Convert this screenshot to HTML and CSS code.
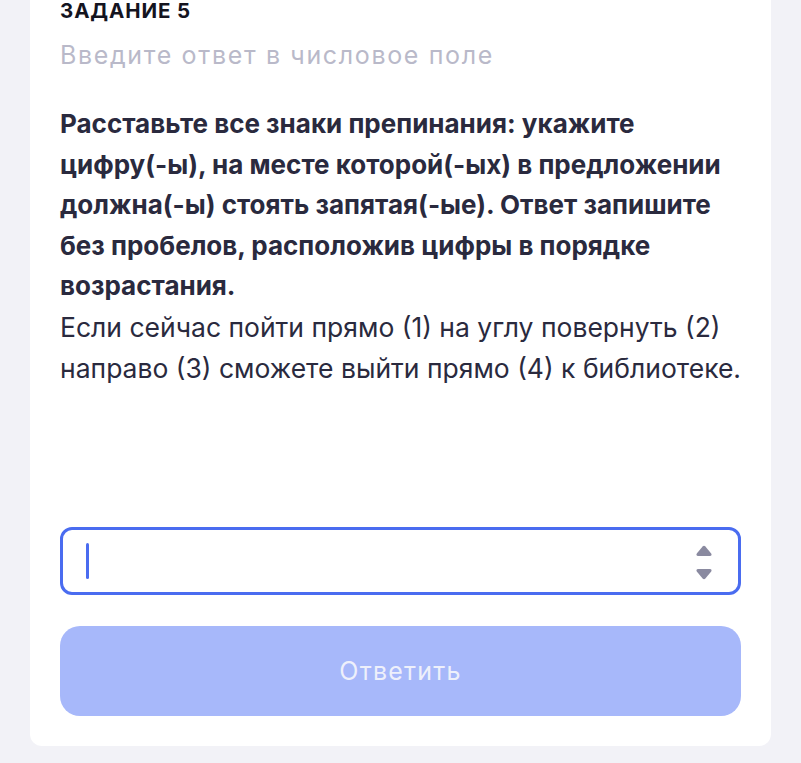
FILE: index.html
```html
<!DOCTYPE html>
<html lang="ru">
<head>
<meta charset="utf-8">
<link rel="stylesheet" href="styles.css">
</head>
<body>
<div class="card">
  <div class="task-title">ЗАДАНИЕ 5</div>
  <div class="hint">Введите ответ в числовое поле</div>
  <div class="question">
    <p class="q-bold">Расставьте все знаки препинания: укажите<br>цифру(-ы), на месте которой(-ых) в предложении<br>должна(-ы) стоять запятая(-ые). Ответ запишите<br>без пробелов, расположив цифры в порядке<br>возрастания.</p>
    <p class="q-text">Если сейчас пойти прямо (1) на углу повернуть (2)<br>направо (3) сможете выйти прямо (4) к библиотеке.</p>
  </div>
  <div class="answer-field">
    <span class="caret"></span>
    <span class="spinner">
      <svg width="16" height="35" viewBox="0 0 16 35">
        <path d="M6.6 1.4 Q8 0 9.4 1.4 L15.2 8.4 Q16.4 11 13.6 11 L2.4 11 Q-0.4 11 0.8 8.4 Z" fill="#8a8aa0"/>
        <path d="M6.6 33.6 Q8 35 9.4 33.6 L15.2 26.6 Q16.4 24 13.6 24 L2.4 24 Q-0.4 24 0.8 26.6 Z" fill="#8a8aa0"/>
      </svg>
    </span>
  </div>
  <button class="submit">Ответить</button>
</div>
</body>
</html>
```
FILE: styles.css
```css
html, body {
  margin: 0;
  padding: 0;
}
body {
  background: #f2f2f7;
  font-family: Inter, "Noto Sans", sans-serif;
  padding: 0 30px;
  height: 763px;
  overflow: hidden;
}
.card {
  background: #ffffff;
  margin-top: -20px;
  border-radius: 12px;
  padding: 20px 30px 30px;
  display: flex;
  flex-direction: column;
  height: 766px;
  box-sizing: border-box;
}
.task-title {
  font-size: 20.5px;
  font-weight: 700;
  letter-spacing: 0.9px;
  color: #14141f;
  line-height: 22px;
}
.hint {
  font-size: 25px;
  letter-spacing: 1.65px;
  color: #b9b9c9;
  line-height: 30px;
  margin-top: 18px;
}
.question {
  margin-top: 34px;
  color: #2a2a3e;
  line-height: 40.6px;
  flex: 1;
}
.question p {
  margin: 0;
  white-space: nowrap;
}
.q-bold {
  font-size: 26px;
  font-weight: 700;
}
.q-text {
  font-size: 26.5px;
  font-weight: 400;
}
.answer-field {
  height: 68px;
  box-sizing: border-box;
  border: 3px solid #4a6cf0;
  border-radius: 12px;
  display: flex;
  align-items: center;
  justify-content: space-between;
  padding: 0 26px 0 23px;
}
.caret {
  width: 3px;
  height: 36px;
  border-radius: 2px;
  background: #4a6cf0;
}
.spinner {
  display: flex;
  margin-top: 3px;
}
.spinner svg {
  display: block;
}
.submit {
  margin-top: 31px;
  height: 90px;
  border: none;
  border-radius: 20px;
  background: #a7b8fa;
  color: #eef0fb;
  font-family: Inter, "Noto Sans", sans-serif;
  font-size: 25px;
  letter-spacing: 1.2px;
  font-weight: 400;
}
```
